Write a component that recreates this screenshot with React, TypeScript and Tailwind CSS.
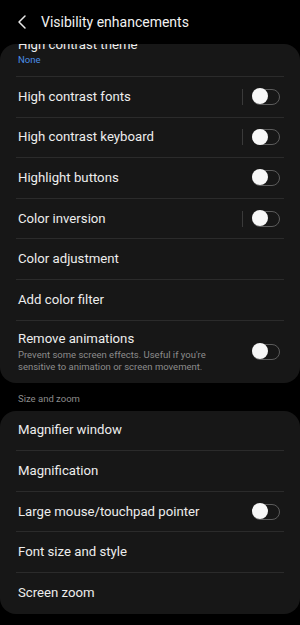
import React from "react";

type Row = {
  label: string;
  sub?: string;
  toggle?: boolean;
  divider?: boolean;
};

const visibilityRows: Row[] = [
  { label: "High contrast fonts", toggle: true, divider: true },
  { label: "High contrast keyboard", toggle: true, divider: true },
  { label: "Highlight buttons", toggle: true },
  { label: "Color inversion", toggle: true, divider: true },
  { label: "Color adjustment" },
  { label: "Add color filter" },
  {
    label: "Remove animations",
    sub: "Prevent some screen effects. Useful if you're sensitive to animation or screen movement.",
    toggle: true,
  },
];

const zoomRows: Row[] = [
  { label: "Magnifier window" },
  { label: "Magnification" },
  { label: "Large mouse/touchpad pointer", toggle: true },
  { label: "Font size and style" },
  { label: "Screen zoom" },
];

const Toggle = () => (
  <div className="relative w-[28px] h-[16px] rounded-full border-[1.5px] border-[#5c5c5c]">
    <div className="absolute -left-[1.5px] -top-[1.5px] w-[16px] h-[16px] rounded-full bg-[#f7f7f7]" />
  </div>
);

const SettingRow = ({ row, last }: { row: Row; last: boolean }) => (
  <div className="px-[16px]">
    <div
      className={
        "flex items-center " +
        (row.sub ? "h-[62px]" : "h-[40.6px]") +
        (last ? "" : " border-b border-[#2b2b2b]")
      }
    >
      <div className="flex-1 pl-[2px]">
        <div className="text-[13.2px] leading-[18px] text-[#ededed]">{row.label}</div>
        {row.sub && (
          <div className="text-[9.5px] leading-[12px] text-[#8c8c8c] pr-[40px] mt-[1px]">
            {row.sub}
          </div>
        )}
      </div>
      {row.divider && <div className="w-px h-[16px] bg-[#3a3a3a] mr-[8px]" />}
      {row.toggle && (
        <div className="pr-[4px] pl-[1px]">
          <Toggle />
        </div>
      )}
    </div>
  </div>
);

export default function App() {
  return (
    <div
      className="w-[300px] h-[625px] bg-black overflow-hidden"
      style={{ fontFamily: "Roboto, 'Noto Sans', sans-serif" }}
    >
      <div className="h-[44px] flex items-center pl-[16px]">
        <svg width="12" height="16" viewBox="0 0 12 16" fill="none" className="mr-[13px]">
          <path d="M9 2 L3 8 L9 14" stroke="#e8e8e8" strokeWidth="1.5" strokeLinecap="round" strokeLinejoin="round" />
        </svg>
        <span className="text-[14px] text-[#f2f2f2]">Visibility enhancements</span>
      </div>

      <div className="bg-[#171717] rounded-[16px] overflow-hidden">
        <div className="px-[16px]">
          <div className="border-b border-[#2b2b2b] pl-[2px] -mt-[8px] pb-[10px]">
            <div className="text-[13.2px] leading-[18px] text-[#ededed]">High contrast theme</div>
            <div className="text-[9.5px] leading-[12px] text-[#4a8ee8]">None</div>
          </div>
        </div>
        {visibilityRows.map((r, i) => (
          <SettingRow key={r.label} row={r} last={i === visibilityRows.length - 1} />
        ))}
      </div>

      <div className="pl-[18px] pt-[10px] pb-[6px] text-[9.5px] leading-[12px] text-[#8c8c8c]">
        Size and zoom
      </div>

      <div className="bg-[#171717] rounded-[16px] overflow-hidden">
        {zoomRows.map((r, i) => (
          <SettingRow key={r.label} row={r} last={i === zoomRows.length - 1} />
        ))}
      </div>
    </div>
  );
}
